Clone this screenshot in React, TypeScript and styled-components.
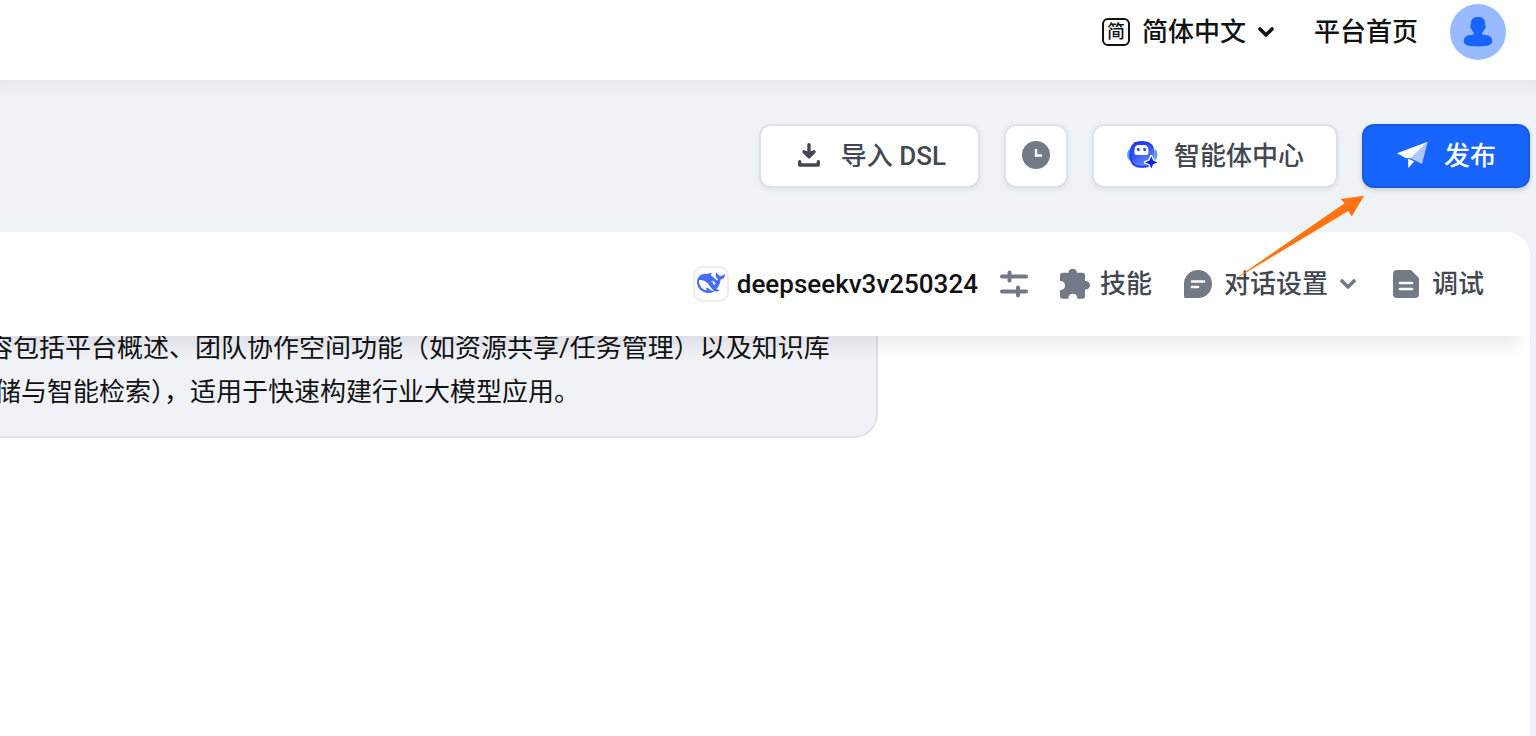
import React from 'react';
import styled, { createGlobalStyle } from 'styled-components';

const GlobalStyle = createGlobalStyle`
  * { box-sizing: border-box; }
  body {
    margin: 0;
    background: #eff3f6;
    font-family: Roboto, "Noto Sans CJK SC", sans-serif;
    font-size: 26px;
    line-height: 40px;
    color: #101213;
  }
  button, a { font: inherit; color: inherit; text-decoration: none; }
`;

const Page = styled.div`
  display: flex;
  flex-direction: column;
  min-height: 100vh;
  overflow: hidden;
`;

const TopBar = styled.header`
  display: flex;
  justify-content: flex-end;
  align-items: center;
  gap: 32px;
  height: 80px;
  padding: 0 30px 16px;
  background: #fff;
  box-shadow: 0 0 16px 6px rgba(0, 0, 0, 0.05);
  font-weight: 500;
`;

const PlainButton = styled.button<{ $gap: number }>`
  display: flex;
  align-items: center;
  gap: ${(p) => p.$gap}px;
  padding: 0;
  border: 0;
  background: none;
  white-space: nowrap;
  cursor: pointer;
`;

const LanguageButton = styled(PlainButton)`
  padding-right: 4px;
`;

const LanguageBadge = styled.span`
  display: flex;
  align-items: center;
  justify-content: center;
  width: 28px;
  height: 28px;
  border: 2px solid #101213;
  border-radius: 6px;
  font-size: 18px;
  line-height: 24px;
`;

const HomeLink = styled.a`
  white-space: nowrap;
`;

const Avatar = styled.button`
  display: flex;
  align-items: center;
  justify-content: center;
  width: 56px;
  height: 56px;
  padding: 0;
  border: 0;
  border-radius: 50%;
  background: #98bbff;
`;

const Toolbar = styled.div`
  position: relative;
  display: flex;
  justify-content: flex-end;
  gap: 24px;
  padding: 44px 6px;
`;

const ToolButton = styled.button<{ $primary?: boolean; $square?: boolean }>`
  display: flex;
  align-items: center;
  justify-content: center;
  gap: 16px;
  height: 64px;
  padding: 0 ${(p) => (p.$square ? 14 : 32)}px;
  border: 2px solid ${(p) => (p.$primary ? '#155adf' : '#dde1e8')};
  border-radius: 12px;
  background: ${(p) => (p.$primary ? '#1764ff' : '#fff')};
  color: ${(p) => (p.$primary ? '#fff' : '#424851')};
  box-shadow: 0 2px 4px rgba(16, 24, 40, ${(p) => (p.$primary ? 0.2 : 0.08)});
  font-weight: 500;
  white-space: nowrap;
  cursor: pointer;
`;

const Pointer = styled.svg`
  position: absolute;
  z-index: 3;
  top: 114px;
  right: 170px;
  pointer-events: none;
`;

const Panel = styled.main`
  flex: 1;
  margin-right: 6px;
  border-top-right-radius: 24px;
  background: #fff;
  overflow: hidden;
`;

const PanelBar = styled.div`
  position: relative;
  z-index: 1;
  display: flex;
  justify-content: flex-end;
  align-items: center;
  gap: 32px;
  height: 104px;
  padding: 0 46px;
  background: #fff;
  box-shadow: -10px 10px 16px rgba(0, 0, 0, 0.08);
  color: #424851;
  font-weight: 500;
`;

const ModelGroup = styled.div`
  display: flex;
  align-items: center;
  gap: 22px;
`;

const ModelName = styled.span`
  color: #101213;
`;

const ModelLogo = styled.span`
  display: flex;
  align-items: center;
  justify-content: center;
  width: 36px;
  height: 36px;
  border: 2px solid #e9edf2;
  border-radius: 10px;
`;

const Bubble = styled.section`
  max-width: 878px;
  margin-top: -10px;
  padding: 0 48px 22px 0;
  border: solid #e0e0ec;
  border-width: 0 2px 2px 0;
  border-bottom-right-radius: 24px;
  background: #f1f2f8;
`;

const Description = styled.p`
  margin: 0 0 0 -5px;
  text-indent: -8px;
  line-height: 44px;
  white-space: nowrap;
`;

const Chevron = ({ color }: { color: string }) => (
  <svg width="20" height="12" viewBox="0 0 20 12" fill="none" stroke={color} strokeWidth="3.6" strokeLinecap="round" strokeLinejoin="round" aria-hidden="true">
    <path d="M2 3l6 6 6-6" />
  </svg>
);

const UserIcon = () => (
  <svg width="30" height="32" viewBox="0 0 30 32" fill="#1764ff" aria-hidden="true">
    <path d="M15 1c4 0 7 2 7 5.500c0 1 .2 2 .6 3.500c.3 1.500-.4 3-1.500 3.800c-.5 1.500-1.300 2.400-2.100 3c0 1.200.8 1.900 2.500 2.100l3 .4c3 .5 4.800 3 4.800 6.200c0 3-3.500 4.900-14.300 4.900S.700 28.500.700 25.500c0-3.200 1.800-5.700 4.800-6.200l3-.4c1.700-.2 2.500-.9 2.500-2.100c-.8-.6-1.600-1.500-2.100-3c-1.100-.8-1.800-2.300-1.500-3.800c.4-1.500.6-2.500.6-3.500C8 3 11 1 15 1z" />
  </svg>
);

const ImportIcon = () => (
  <svg width="32" height="32" viewBox="0 0 32 32" fill="none" stroke="#424851" strokeWidth="3.4" strokeLinecap="round" strokeLinejoin="round" aria-hidden="true">
    <path d="M16 4.700v11" />
    <path d="M11 11.800l5 5 5-5-5 2z" fill="#424851" />
    <path d="M6.700 21.700V25h18.600v-3.300" />
  </svg>
);

const ClockIcon = () => (
  <svg width="32" height="32" viewBox="0 0 32 32" aria-hidden="true">
    <circle cx="16" cy="15" r="14" fill="#737a87" />
    <path d="M16 9v6.500h6" fill="none" stroke="#fff" strokeWidth="2.400" />
  </svg>
);

const RobotIcon = () => (
  <svg width="32" height="32" viewBox="0 0 32 32" aria-hidden="true">
    <defs>
      <linearGradient id="robot" x1="0" y1="0" x2="0.500" y2="1">
        <stop offset="0" stopColor="#1f2cf5" />
        <stop offset="0.450" stopColor="#2e50f8" />
        <stop offset="1" stopColor="#6a8cff" />
      </linearGradient>
    </defs>
    <path d="M4 9C.200 11 .200 18.500 4 20.500zM28.500 9c3.800 2 3.800 9.500 0 11.500z" fill="#4b9cff" />
    <path d="M16 1.200c9 0 12.500 4.300 12.500 13.300S25 28 16 28 3.500 23.500 3.500 14.500 7 1.200 16 1.200z" fill="url(#robot)" />
    <path d="M4.500 14c0 9 3.500 12.800 11.500 12.800 5 0 8-1.500 9.800-4.500M8 3.500C10 2.300 12.500 2 16 2c6 0 9.500 2 11 6" fill="none" stroke="#1f38ee" strokeWidth="1.500" />
    <path d="M12.500 5h5.500q4 0 4.300 4.500l.2 2.500q.2 3-2.500 3H11q-2.800 0-2.700-3l.2-2.500Q8.800 5 12.500 5z" fill="#fff" />
    <path d="M10.700 8.500c1.800-1 3.500 0 3 1.700-.5 1.400-2.500 1-2.400 0zM17 8.500c1.800-1 3.500 0 3 1.700-.5 1.400-2.500 1-2.400 0z" fill="#1549ff" />
    <path d="M25.300 16.500l1.700 4.200 4.300 1.700-4.300 1.700-1.700 4.200-1.700-4.200-4.300-1.700 4.300-1.700z" fill="#0b20ff" stroke="#fff" strokeWidth="3" strokeLinejoin="round" />
    <path d="M25.300 16.200l1.800 4.400 4.400 1.800-4.400 1.800-1.800 4.400-1.800-4.400-4.400-1.800 4.400-1.800z" fill="#0b20ff" />
  </svg>
);

const PlaneIcon = () => (
  <svg width="32" height="32" viewBox="0 0 32 32" aria-hidden="true">
    <path d="M31.700 1.700L1 13.300l9 5 5.500-.3z" fill="#fff" />
    <path d="M12.200 18.500V28l6-6.500z" fill="#fff" />
    <path d="M31.700 1.700L14.500 18.200l11.500 5.800z" fill="#adc6ff" />
  </svg>
);

const WhaleIcon = () => (
  <svg width="28" height="28" viewBox="0 0 24 24" fill="#466cff" aria-hidden="true">
    <path d="M23.748 3.651c-.254-.124-.364.113-.512.233-.051.04-.094.09-.137.137-.372.397-.806.657-1.373.626-.829-.046-1.537.214-2.163.848-.133-.782-.575-1.248-1.247-1.548-.352-.155-.708-.311-.955-.65-.172-.24-.219-.509-.305-.774-.055-.16-.11-.323-.293-.35-.2-.031-.278.136-.356.276-.313.572-.434 1.202-.422 1.840.027 1.436.633 2.580 1.838 3.393.137.094.172.187.129.323-.082.280-.180.553-.266.833-.055.179-.137.218-.328.140a5.500 5.500 0 0 1-1.737-1.179c-.857-.828-1.631-1.743-2.597-2.460a12 12 0 0 0-.689-.470c-.985-.957.130-1.743.387-1.836.270-.098.094-.433-.778-.428-.872.003-1.670.295-2.687.685a3 3 0 0 1-.465.136 9.600 9.600 0 0 0-2.883-.101c-1.885.210-3.390 1.100-4.497 2.622C.082 7.776-.231 9.854.152 12.020c.403 2.284 1.568 4.175 3.360 5.653 1.857 1.533 3.997 2.284 6.438 2.140 1.482-.085 3.132-.284 4.994-1.860.470.234.962.328 1.780.398.629.058 1.235-.031 1.705-.129.735-.155.684-.836.418-.961-2.155-1.004-1.682-.595-2.112-.926 1.095-1.295 2.768-3.598 3.285-6.760.050-.346.115-.834.108-1.114-.004-.170.035-.238.230-.257a4.200 4.200 0 0 0 1.545-.475c1.397-.763 1.960-2.016 2.093-3.517.020-.230-.004-.467-.247-.588M11.580 17.168c-2.088-1.642-3.101-2.183-3.520-2.160-.390.024-.320.472-.234.763.090.288.207.487.371.740.114.167.192.416-.113.603-.673.416-1.842-.140-1.897-.168-1.361-.801-2.500-1.860-3.301-3.306-.775-1.393-1.225-2.888-1.299-4.482-.020-.386.094-.522.477-.592a4.700 4.700 0 0 1 1.530-.038c2.131.311 3.946 1.264 5.467 2.774.868.860 1.525 1.887 2.202 2.890.720 1.066 1.494 2.082 2.480 2.915.348.291.626.513.892.677-.802.090-2.140.109-3.055-.615zm1.001-6.440a.306.306 0 0 1 .415-.287.300.300 0 0 1 .113.074.300.300 0 0 1 .086.214c0 .170-.136.307-.308.307a.303.303 0 0 1-.306-.307m3.110 1.596c-.200.081-.400.151-.591.160a1.250 1.250 0 0 1-.798-.254c-.274-.230-.470-.358-.551-.758a1.700 1.700 0 0 1 .015-.588c.070-.327-.007-.537-.238-.727-.188-.156-.426-.199-.689-.199a.600.600 0 0 1-.254-.078.253.253 0 0 1-.114-.358 1 1 0 0 1 .192-.210c.356-.202.767-.136 1.146.016.352.144.618.408 1.001.782.392.451.462.576.685.915.176.264.336.536.446.848.066.194-.020.353-.250.450" />
  </svg>
);

const SlidersIcon = () => (
  <svg width="28" height="28" viewBox="0 0 28 28" fill="none" stroke="#737a87" strokeWidth="4" strokeLinecap="round" aria-hidden="true">
    <path d="M2 6.500h24M2 21.500h24" />
    <path d="M9.500 2.500v8M18 17.500v8" />
  </svg>
);

const PuzzleIcon = () => (
  <svg width="32" height="32" viewBox="0 0 32 32" fill="#737a87" aria-hidden="true">
    <path d="M3 4.800h5.500C8.500 2.200 10.300.700 12.700.700s4.200 1.500 4.200 4.100h5.600q2.500 0 2.500 2.500v5.700c3.200-.1 5 1.800 5 4.300s-1.800 4.400-5 4.300v6.600q0 2.500-2.500 2.500h-5.200c.2-3-1.600-4.900-4.400-4.900s-4.600 1.900-4.400 4.900H2.500Q0 30.700 0 28.200v-6.100c3 .2 5-1.700 5-4.600S3 12.700 0 12.900V7.300Q0 4.800 3 4.800z" />
  </svg>
);

const ChatIcon = () => (
  <svg width="28" height="28" viewBox="0 0 28 28" aria-hidden="true">
    <path d="M14 0a14 14 0 0 1 0 28H1.500Q0 28 0 26.500V14A14 14 0 0 1 14 0z" fill="#737a87" />
    <path d="M8 11.500h12M8 17h6" stroke="#fff" strokeWidth="2.600" strokeLinecap="round" />
  </svg>
);

const DocumentIcon = () => (
  <svg width="28" height="28" viewBox="-1 0 28 28" aria-hidden="true">
    <path d="M4 0h14l8 8v16q0 4-4 4H4q-4 0-4-4V4q0-4 4-4z" fill="#737a87" />
    <path d="M7 13h12M7 19h12" stroke="#fff" strokeWidth="2.600" strokeLinecap="round" />
  </svg>
);

export default function App() {
  return (
    <Page>
      <GlobalStyle />
      <TopBar>
        <LanguageButton $gap={12}>
          <LanguageBadge>简</LanguageBadge>
          <span>简体中文</span>
          <Chevron color="#101213" />
        </LanguageButton>
        <HomeLink href="#home">平台首页</HomeLink>
        <Avatar aria-label="用户">
          <UserIcon />
        </Avatar>
      </TopBar>

      <Toolbar>
        <ToolButton>
          <ImportIcon />
          导入 DSL
        </ToolButton>
        <ToolButton $square aria-label="历史">
          <ClockIcon />
        </ToolButton>
        <ToolButton>
          <RobotIcon />
          智能体中心
        </ToolButton>
        <ToolButton $primary>
          <PlaneIcon />
          发布
        </ToolButton>
        <Pointer width="128" height="84" viewBox="0 0 128 84" aria-hidden="true">
          <path d="M125.700 2L103 5.300l4 4L1 82.500 110.300 16.700l3.400 5.300z" fill="#ff7410" stroke="#ff7410" strokeWidth="0.600" />
        </Pointer>
      </Toolbar>

      <Panel>
        <PanelBar>
          <ModelGroup>
            <PlainButton $gap={8}>
              <ModelLogo>
                <WhaleIcon />
              </ModelLogo>
              <ModelName>deepseekv3v250324</ModelName>
            </PlainButton>
            <PlainButton $gap={0} aria-label="模型参数">
              <SlidersIcon />
            </PlainButton>
          </ModelGroup>
          <PlainButton $gap={8}>
            <PuzzleIcon />
            技能
          </PlainButton>
          <PlainButton $gap={12}>
            <ChatIcon />
            对话设置
            <Chevron color="#737a87" />
          </PlainButton>
          <PlainButton $gap={12}>
            <DocumentIcon />
            调试
          </PlainButton>
        </PanelBar>
        <Bubble>
          <Description>
            容包括平台概述、团队协作空间功能（如资源共享/任务管理）以及知识库
            <br />
            储与智能检索），适用于快速构建行业大模型应用。
          </Description>
        </Bubble>
      </Panel>
    </Page>
  );
}
